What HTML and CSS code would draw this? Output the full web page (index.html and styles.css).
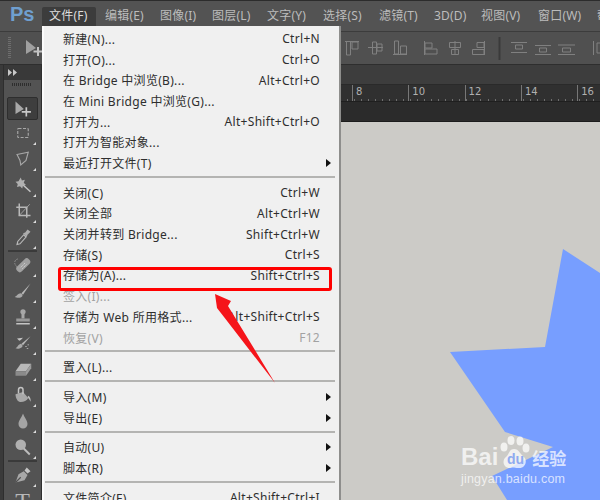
FILE: index.html
```html
<!DOCTYPE html>
<html lang="zh-CN">
<head>
  <meta charset="UTF-8" />
  <title>Photoshop 文件菜单</title>
  <link rel="stylesheet" href="styles.css">
</head>
<body>
  <header class="menubar">
    <div class="logo">Ps</div>
    <div class="menubar-item active">文件(F)</div>
    <div class="menubar-item">编辑(E)</div>
    <div class="menubar-item">图像(I)</div>
    <div class="menubar-item">图层(L)</div>
    <div class="menubar-item">文字(Y)</div>
    <div class="menubar-item">选择(S)</div>
    <div class="menubar-item">滤镜(T)</div>
    <div class="menubar-item">3D(D)</div>
    <div class="menubar-item">视图(V)</div>
    <div class="menubar-item">窗口(W)</div>
    <div class="menubar-item">帮助(H)</div>
  </header>

  <div class="options">
    <div class="grip-v"></div>
    <svg class="options-tool" viewBox="0 0 20 20">
      <polygon points="1,2 1,16 11,10" fill="#a0a0a0"/>
      <path d="M13 9v9M8.500 13.500h9" stroke="#c4c4c4" stroke-width="2"/>
    </svg>
    <svg class="align-icons" viewBox="0 0 255 33" fill="none" stroke="#808080">
      <path d="M0 9.500h14M1.500 10v13h4V10M7 10h6v7H7z"/>
      <path d="M23 15.500h15M27.500 10v12h4V10zM32 12h5v7h-5z"/>
      <path d="M48 22.500h14M49.500 9v13h4V9zM55.500 14h6v8h-6z"/>
      <path d="M79.500 9v14M80 11h7v5h-7zM80 17h12v5H80z"/>
      <path d="M110 9v14M104.500 10.500h11v5h-11zM106.500 17.500h7v5h-7z"/>
      <path d="M139.500 9v14M132 10.500h7v5h-7zM127.500 17.500h11.500v5h-11.500z"/>
      <path d="M166 10.500h16M170.500 13h7v4h-7zM166 20.500h16"/>
      <path d="M190 13.500h16M194.500 16h7v4h-7zM190 22.500h16"/>
      <path d="M213 13h17M217.500 16h8v4h-8zM213 22.500h17"/>
      <path d="M248.500 9v14M252 11h6v10h-6z"/>
      <path d="M154.500 5v23" stroke="#3a3a3a" stroke-width="2"/>
    </svg>
  </div>

  <div class="work">
    <aside class="tools">
      <div class="collapse">
        <svg class="collapse-icon" viewBox="0 0 9 7"><path d="M0 0l4 3.500L0 7zM5 0l4 3.500L5 7z" fill="#c8c8c8"/></svg>
      </div>
      <div class="grip-h"></div>

      <div class="tool tool-active">
        <svg viewBox="0 0 24 24"><polygon points="3,3 3,18 13,12" fill="#a8a8a8"/><path d="M16 10v11M10.500 15.500h11" stroke="#c8c8c8" stroke-width="2"/></svg>
      </div>
      <div class="tool">
        <svg viewBox="0 0 24 24"><rect x="5" y="6" width="14" height="12" rx="1" fill="none" stroke="#a8a8a8" stroke-width="1.500" stroke-dasharray="4 2"/></svg>
      </div>
      <div class="tool">
        <svg viewBox="0 0 24 24"><path d="M4 6l15-3-3 11-7 6-1-6z" fill="none" stroke="#a8a8a8" stroke-width="1.500"/></svg>
      </div>
      <div class="tool">
        <svg viewBox="0 0 24 24"><path d="M11 11l11 10" stroke="#c4c4c4" stroke-width="2"/><path d="M9 2l1.500 4 4-1-1.500 4 3 3-4 .5-1 4-3-3-4 1 1-4-3-3 4-.5z" fill="#b0b0b0"/></svg>
      </div>
      <div class="tool">
        <svg viewBox="0 0 24 24" fill="none" stroke="#b8b8b8" stroke-width="2"><path d="M3 7h14v14M7 2v16h15"/><path d="M7 18L21 3" stroke-width="1"/></svg>
      </div>
      <div class="tool">
        <svg viewBox="0 0 24 24"><path d="M4 22l1-4 8-9 3 3-8 9z" fill="none" stroke="#b8b8b8" stroke-width="1.500"/><path d="M12 7l3-1 3-4 4 3-4 4-1 3z" fill="#adadad"/></svg>
      </div>
      <div class="tool-sep"></div>
      <div class="tool">
        <svg viewBox="0 0 24 24"><rect x="8" y="1" width="9" height="22" rx="4" transform="rotate(45 12 12)" fill="#a0a0a0"/><path d="M9 15l6-6M11 17l6-6" stroke="#d8d8d8" stroke-dasharray="2 1"/><path d="M5 4a5 5 0 0 0-3 8l5 7" fill="none" stroke="#a8a8a8" stroke-dasharray="2 1.500"/></svg>
      </div>
      <div class="tool">
        <svg viewBox="0 0 24 24"><path d="M22 2L10 15l2 2z" fill="#b8b8b8"/><path d="M9 15c3 1 3 4 1 5-3 2-7 1-9 0 3-1 4-5 8-5z" fill="#a8a8a8"/></svg>
      </div>
      <div class="tool">
        <svg viewBox="0 0 24 24"><circle cx="12" cy="5" r="3.500" fill="#a8a8a8"/><path d="M10 8h4v6h-4z" fill="#a8a8a8"/><path d="M3 14h18v4H3z" fill="#989898"/><path d="M3 20h18v2H3z" fill="#c4c4c4"/></svg>
      </div>
      <div class="tool">
        <svg viewBox="0 0 24 24"><path d="M22 3L10 13l2 2z" fill="#b8b8b8"/><path d="M4 6l8-1-3 3-2 1z" fill="#c4c4c4"/><path d="M9 13c3 1 3 4 1 5-3 2-6 2-8 1 3-1 3-5 7-6z" fill="#a8a8a8"/><path d="M16 16v1M19 14v1M18 19v1" stroke="#c4c4c4" stroke-width="2"/></svg>
      </div>
      <div class="tool">
        <svg viewBox="0 0 24 24"><path d="M2 15l7-10h14l-7 10z" fill="#b8b8b8"/><path d="M2 15h14v6H2z" fill="#8a8a8a"/><path d="M16 15l7-10v6l-7 10z" fill="#9c9c9c"/></svg>
      </div>
      <div class="tool">
        <svg viewBox="0 0 24 24"><path d="M2 11l10-3 7 8c-2 4-8 6-12 5-3-1-5-6-5-10z" fill="#a8a8a8"/><path d="M6 10V5a3 3 0 0 1 6 0v6" fill="none" stroke="#c4c4c4" stroke-width="2"/><path d="M19 13c2 1 4 4 3 8-1-3-3-5-4-6z" fill="#bcbcbc"/></svg>
      </div>
      <div class="tool">
        <svg viewBox="0 0 24 24"><path d="M12 2c2 6 6 9 6 14a6 6 0 0 1-12 0c0-5 4-8 6-14z" fill="#a4a4a4"/></svg>
      </div>
      <div class="tool">
        <svg viewBox="0 0 24 24"><circle cx="9" cy="9" r="7" fill="#b0b0b0"/><path d="M13 14l8 8" stroke="#bcbcbc" stroke-width="2.500"/></svg>
      </div>
      <div class="tool-sep"></div>
      <div class="tool">
        <svg viewBox="0 0 24 24"><path d="M2 22l4-11 7-4 5 5-4 7z" fill="#a8a8a8"/><path d="M2 22l7-7" stroke="#505050" stroke-width="1.500"/><path d="M14 6l3-4 5 5-4 3z" fill="#c4c4c4"/></svg>
      </div>
      <div class="tool tool-type">T</div>
    </aside>

    <main class="doc">
      <div class="doc-tabs"></div>
      <div class="ruler">
        <span class="ruler-mark">8</span>
        <span class="ruler-mark">10</span>
        <span class="ruler-mark">12</span>
        <span class="ruler-mark">14</span>
        <span class="ruler-mark">16</span>
      </div>
      <div class="doc-head"></div>
      <div class="canvas">
        <svg class="star" viewBox="42 122 558 378">
          <polygon points="563,249 600,273 600,500 507,500 492,476 553,447 505,432 450,352 545,347" fill="#779eff"/>
        </svg>
        <div class="watermark">
          <div class="watermark-top">
            <span class="wm-bai">Bai</span>
            <svg class="wm-paw" viewBox="0 0 32 34">
              <ellipse cx="6" cy="11" rx="3.500" ry="4.500"/>
              <ellipse cx="13" cy="4.500" rx="3.500" ry="4.500"/>
              <ellipse cx="22" cy="5" rx="3.500" ry="4.500"/>
              <ellipse cx="28" cy="12" rx="3.500" ry="4.500"/>
              <path d="M16 13c5 0 6 5 10 8 4 4 1 12-6 11-3 0-5-1-7 0-7 1-10-7-5-11 3-2 3-8 8-8z"/>
              <text x="9" y="28" class="wm-du">du</text>
            </svg>
            <span class="wm-jy">经验</span>
          </div>
          <div class="wm-url">jingyan.baidu.com</div>
        </div>
      </div>
    </main>
  </div>

  <nav class="menu">
    <div class="menu-row"><span>新建(N)...</span><span>Ctrl+N</span></div>
    <div class="menu-row"><span>打开(O)...</span><span>Ctrl+O</span></div>
    <div class="menu-row"><span>在 Bridge 中浏览(B)...</span><span>Alt+Ctrl+O</span></div>
    <div class="menu-row"><span>在 Mini Bridge 中浏览(G)...</span></div>
    <div class="menu-row"><span>打开为...</span><span>Alt+Shift+Ctrl+O</span></div>
    <div class="menu-row"><span>打开为智能对象...</span></div>
    <div class="menu-row"><span>最近打开文件(T)</span><i class="sub-arrow"></i></div>
    <div class="menu-sep"></div>
    <div class="menu-row"><span>关闭(C)</span><span>Ctrl+W</span></div>
    <div class="menu-row"><span>关闭全部</span><span>Alt+Ctrl+W</span></div>
    <div class="menu-row"><span>关闭并转到 Bridge...</span><span>Shift+Ctrl+W</span></div>
    <div class="menu-row"><span>存储(S)</span><span>Ctrl+S</span></div>
    <div class="menu-row"><span>存储为(A)...</span><span>Shift+Ctrl+S</span></div>
    <div class="menu-row disabled"><span>签入(I)...</span></div>
    <div class="menu-row"><span>存储为 Web 所用格式...</span><span>Alt+Shift+Ctrl+S</span></div>
    <div class="menu-row disabled"><span>恢复(V)</span><span>F12</span></div>
    <div class="menu-sep"></div>
    <div class="menu-row"><span>置入(L)...</span></div>
    <div class="menu-sep"></div>
    <div class="menu-row"><span>导入(M)</span><i class="sub-arrow"></i></div>
    <div class="menu-row"><span>导出(E)</span><i class="sub-arrow"></i></div>
    <div class="menu-sep"></div>
    <div class="menu-row"><span>自动(U)</span><i class="sub-arrow"></i></div>
    <div class="menu-row"><span>脚本(R)</span><i class="sub-arrow"></i></div>
    <div class="menu-sep"></div>
    <div class="menu-row"><span>文件简介(F)...</span><span>Alt+Shift+Ctrl+I</span></div>
  </nav>

  <div class="callout-box"></div>
  <svg class="callout-arrow" viewBox="0 0 70 100">
    <polygon points="5,4 21,11 18,16 65,93 14,27 7,18" fill="#f5141a"/>
  </svg>
</body>
</html>
```

FILE: styles.css
```css
* {
  box-sizing: border-box;
}

html,
body {
  height: 100%;
}

body {
  margin: 0;
  overflow: hidden;
  display: flex;
  flex-direction: column;
  background: #3a3a3a;
  font-family: "Noto Sans", "Noto Sans CJK SC", sans-serif;
  font-size: 12px;
}

/* menu bar */
.menubar {
  height: 32px;
  flex: none;
  display: grid;
  grid-template-columns: 42px 56px 55px 52px 55px 56px 56px 55px 47px 57px 59px 40px;
  align-items: start;
  background: #535353;
  border-top: 1px solid #2c2c2c;
  border-bottom: 1px solid #3c3c3c;
  color: #bcbcbc;
}

.logo {
  padding: 2px 0 0 10px;
  font-family: "Liberation Sans", sans-serif;
  font-size: 20px;
  font-weight: bold;
  color: #6f9fd0;
}

.menubar-item {
  height: 19px;
  margin-top: 6px;
  padding-left: 7px;
  line-height: 18px;
  white-space: nowrap;
  letter-spacing: 0.2px;
}

.menubar-item.active {
  margin-right: 2px;
  background: #3c3c3c;
  border-radius: 2px 2px 0 0;
  color: #dedede;
}

/* options bar */
.options {
  height: 33px;
  flex: none;
  display: flex;
  align-items: center;
  background: #505050;
  border-bottom: 1px solid #2e2e2e;
}

.grip-v {
  width: 3px;
  height: 22px;
  margin-left: 8px;
  background: repeating-linear-gradient(to bottom, #6e6e6e 0 1px, transparent 1px 2px);
}

.options-tool {
  width: 20px;
  height: 20px;
  margin-left: 14px;
}

.align-icons {
  width: 255px;
  height: 33px;
  margin-left: auto;
}

.work {
  flex: 1;
  min-height: 0;
  display: flex;
}

/* tool panel */
.tools {
  width: 39px;
  margin-left: 3px;
  flex: none;
  background: #535353;
  border-left: 1px solid #2e2e2e;
  border-right: 1px solid #2e2e2e;
}

.collapse {
  height: 15px;
  display: flex;
  align-items: center;
  padding-left: 4px;
  background: #393939;
}

.collapse-icon {
  width: 9px;
  height: 7px;
}

.grip-h {
  width: 20px;
  height: 3px;
  margin: 3px 0 11px 8px;
  background: repeating-linear-gradient(to right, #2e2e2e 0 1px, transparent 1px 2px);
}

.tool {
  position: relative;
  height: 26px;
  display: flex;
  align-items: center;
  justify-content: center;
}

.tool svg {
  width: 18px;
  height: 18px;
}

.tool::after {
  content: "";
  position: absolute;
  right: 5px;
  bottom: 1px;
  border-left: 3px solid transparent;
  border-bottom: 3px solid #dcdcdc;
}

.tool-active {
  height: 23px;
  margin: 0 3px;
  background: #3e3e3e;
  border: 1px solid #2e2e2e;
  border-radius: 2px;
}

.tool-active::after,
.tool-type::after {
  display: none;
}

.tool-active svg {
  width: 20px;
  height: 20px;
}

.tool-sep {
  height: 2px;
  margin: 0 4px;
  background: #3a3a3a;
}

.tool-type {
  font-family: "Liberation Serif", serif;
  font-size: 24px;
  color: #b8b8b8;
}

/* document area */
.doc {
  flex: 1;
  min-width: 0;
  display: flex;
  flex-direction: column;
}

.doc-tabs {
  height: 20px;
  flex: none;
  background: #3d3d3d;
  border-bottom: 1px solid #2a2a2a;
}

.ruler {
  height: 17px;
  flex: none;
  display: flex;
  padding-left: 310px;
  background-color: #303030;
  background-image: repeating-linear-gradient(to right, #6e6e6e 0 1px, transparent 1px 7.04px);
  background-size: 100% 2px;
  background-repeat: no-repeat;
  background-position: 2px 14px;
  border-bottom: 1px solid #1f1f1f;
}

.ruler-mark {
  width: 56.3px;
  flex: none;
  padding-left: 3px;
  border-left: 1px solid #777;
  font-family: "DejaVu Sans", sans-serif;
  font-size: 10px;
  line-height: 14px;
  color: #b0b0b0;
}

.doc-head {
  height: 20px;
  flex: none;
  background: #2b2b2b;
  border-bottom: 1px solid #1c1c1c;
}

.canvas {
  position: relative;
  flex: 1;
  min-height: 0;
  background: #cccbc7;
}

.star {
  display: block;
  width: 100%;
  height: 100%;
}

.watermark {
  position: absolute;
  left: 419px;
  top: 314px;
  color: rgba(255, 255, 255, 0.72);
}

.watermark-top {
  display: flex;
  align-items: flex-end;
  height: 34px;
}

.wm-bai {
  font-family: "Liberation Sans", sans-serif;
  font-size: 24px;
  font-weight: bold;
  line-height: 26px;
}

.wm-paw {
  width: 32px;
  height: 34px;
  fill: rgba(255, 255, 255, 0.72);
}

.wm-du {
  font-family: "Liberation Sans", sans-serif;
  font-size: 14px;
  font-weight: bold;
  fill: #8faaf0;
}

.wm-jy {
  margin-left: 2px;
  font-family: "Noto Sans CJK SC", sans-serif;
  font-size: 17px;
  font-weight: bold;
  line-height: 25px;
}

.wm-url {
  margin-top: 2px;
  font-family: "Liberation Sans", sans-serif;
  font-size: 12.5px;
  letter-spacing: 0.2px;
  white-space: nowrap;
}

/* file menu */
.menu {
  position: absolute;
  left: 42px;
  top: 26px;
  width: 297px;
  height: 480px;
  padding-top: 2.6px;
  background: #f0f0f0;
  border-left: 2px solid #fbfbfb;
  box-shadow: 2px 0 0 #8e8e8c;
  color: #2e2e2e;
  letter-spacing: 0.3px;
}

.menu-row {
  height: 20.7px;
  display: flex;
  align-items: center;
  justify-content: space-between;
  padding: 0 19px 0 19px;
  white-space: nowrap;
}

.menu-row.disabled {
  color: #a2a2a2;
}

.menu-sep {
  height: 2px;
  margin: 2.6px 4px 4.4px 1px;
  background: #b4b4b2;
}

.sub-arrow {
  margin-right: -11px;
  border-left: 5px solid #111;
  border-top: 4px solid transparent;
  border-bottom: 4px solid transparent;
}

/* red annotation */
.callout-box {
  position: absolute;
  left: 58px;
  top: 267px;
  width: 274px;
  height: 24px;
  border: 3px solid #f00;
  border-radius: 3px;
}

.callout-arrow {
  position: absolute;
  left: 210px;
  top: 290px;
  width: 70px;
  height: 100px;
}
```
